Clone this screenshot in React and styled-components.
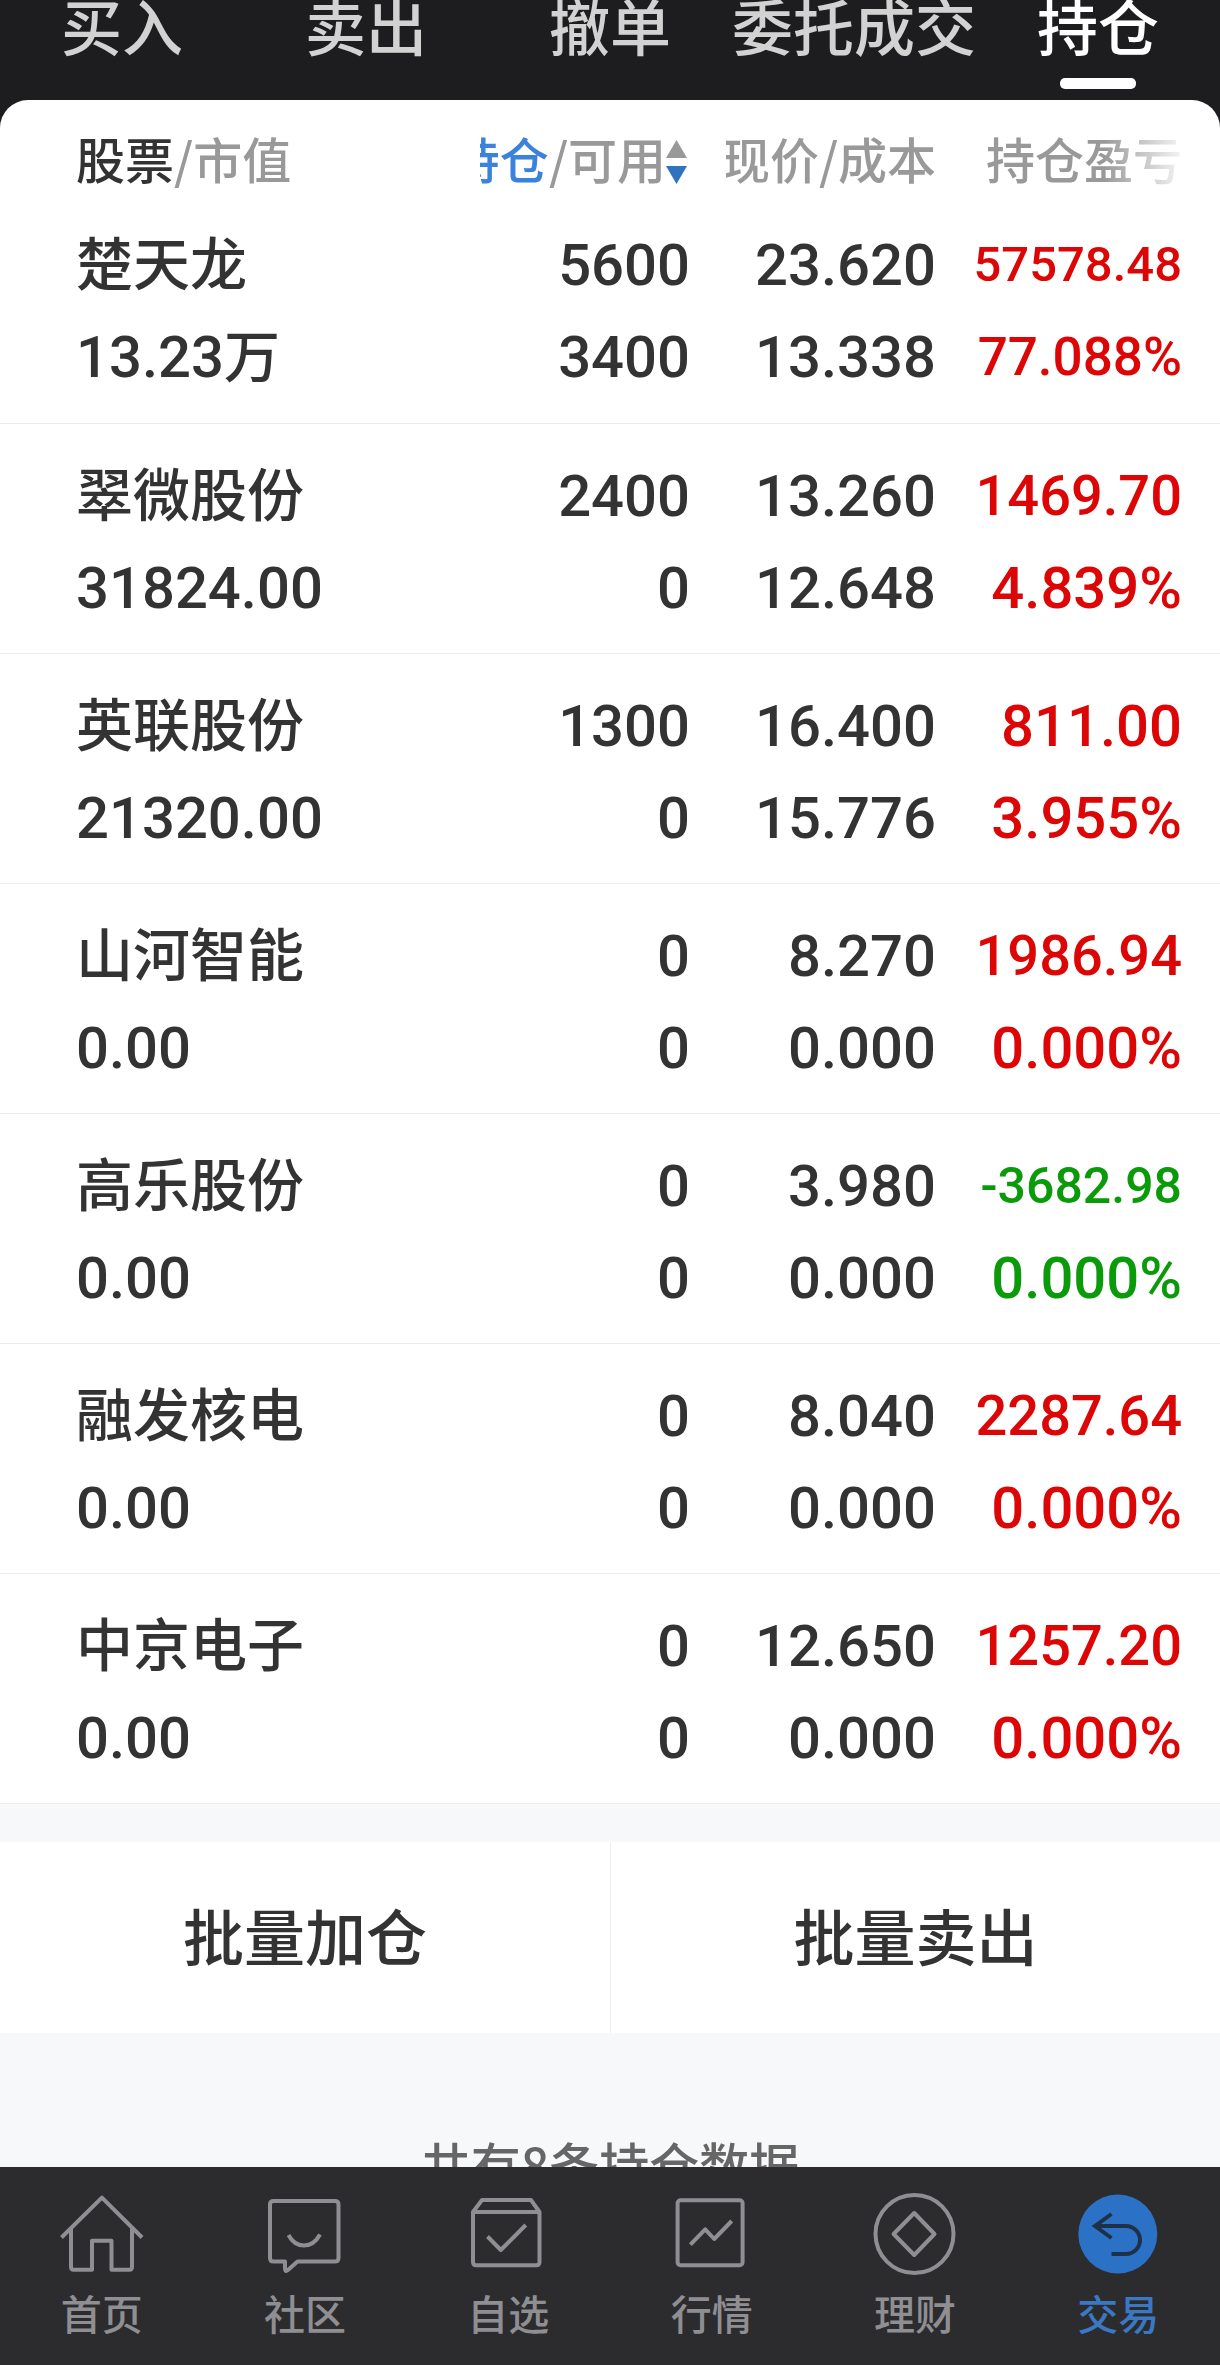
import React, { useState } from "react";
import styled, { createGlobalStyle } from "styled-components";

const cjk = '"Noto Sans CJK SC", sans-serif';
const numeric = 'Roboto, "Noto Sans CJK SC", sans-serif';

const GlobalStyle = createGlobalStyle`
  *, *::before, *::after { box-sizing: border-box; }
  body {
    margin: 0;
    background: #f7f8fa;
    font-family: ${cjk};
    font-weight: 500;
    color: #333;
  }
  button {
    margin: 0;
    padding: 0;
    border: 0;
    background: none;
    font: inherit;
    color: inherit;
    cursor: pointer;
  }
`;

const Screen = styled.div`
  display: flex;
  flex-direction: column;
  height: 100vh;
  background: #f7f8fa;
`;

const TabStrip = styled.nav`
  flex: none;
  display: grid;
  grid-template-columns: repeat(5, 1fr);
  background: #1d1d1f;
`;

const Tab = styled.button`
  display: flex;
  flex-direction: column;
  align-items: center;
  gap: 28px;
  padding-bottom: 11px;
  font-size: 61px;
  line-height: 50px;
  white-space: nowrap;
  color: ${(p) => (p.$active ? "#fff" : "#d2d2d2")};

  &::after {
    content: "";
    width: 76px;
    height: 11px;
    border-radius: 5px;
    background: ${(p) => (p.$active ? "#fff" : "transparent")};
  }
`;

const Backdrop = styled.div`
  flex: 1;
  min-height: 0;
  background: linear-gradient(#1d1d1f 60px, #f7f8fa 60px);
`;

const Scroller = styled.main`
  height: 100%;
  overflow-y: auto;
  scrollbar-width: none;
  border-radius: 28px 28px 0 0;
  background: #f7f8fa;
`;

const Holdings = styled.table`
  width: 100%;
  table-layout: fixed;
  border-collapse: collapse;
  background: #fff;
`;

const StockCol = styled.col``;
const ValueCol = styled.col`
  width: 246px;
`;
const ProfitCol = styled.col`
  width: 284px;
`;

const HeadCell = styled.th`
  height: 93px;
  padding: 28px ${(p) => (p.$last ? "38px" : "0")} 0 ${(p) => (p.$first ? "76px" : "36px")};
  font-size: 49px;
  font-weight: 500;
  line-height: 60px;
  text-align: left;
  vertical-align: top;
  white-space: nowrap;
  color: #999;
`;

const HeadLabel = styled.div`
  display: flex;
  align-items: center;
  justify-content: ${(p) => (p.$start ? "flex-start" : "flex-end")};
  overflow: hidden;
`;

const SortButton = styled.button`
  display: flex;
  align-items: center;
  font-weight: 500;
`;

const FadedText = styled.span`
  mask-image: linear-gradient(to right, #000 60%, rgba(0, 0, 0, 0.1) 100%);
`;

const Strong = styled.span`
  color: #333;
`;
const Sorted = styled.span`
  color: #3b82dc;
`;

const Row = styled.tr`
  border-bottom: 1px solid #ededed;
`;

const Cell = styled.td`
  height: 230px;
  padding: 26px ${(p) => (p.$last ? "38px" : "0")} 19px ${(p) => (p.$first ? "76px" : "0")};
  text-align: ${(p) => (p.$first ? "left" : "right")};
  vertical-align: top;
  white-space: nowrap;
  font-family: ${numeric};
  font-size: 58px;
  line-height: 92px;
  color: ${(p) => (p.$tone === "up" ? "#dd0606" : p.$tone === "down" ? "#0a9a0a" : "#333")};
`;

const Name = styled.div`
  height: 92px;
  font-family: ${cjk};
  font-size: 57px;
  line-height: 82px;
`;

const Line = styled.div`
  height: 92px;
  font-size: ${(p) => (p.$size ? `${p.$size}px` : "inherit")};
`;

const Unit = styled.span`
  font-family: ${cjk};
  font-size: 56px;
  line-height: 1;
`;

const Actions = styled.div`
  display: grid;
  grid-template-columns: 1fr 1fr;
  margin-top: 38px;
  background: #fff;
`;

const ActionButton = styled.button`
  height: 191px;
  padding-bottom: 4px;
  font-size: 61px;
  line-height: 80px;

  & + & {
    border-left: 1px solid #eee;
  }
`;

const Summary = styled.p`
  margin: 0;
  padding: 95px 0 40px;
  font-size: 50px;
  line-height: 70px;
  text-align: center;
  color: #666;
`;

const BottomNav = styled.nav`
  flex: none;
  display: grid;
  grid-template-columns: repeat(6, 1fr);
  padding: 25px 0 29px;
  background: #2c2c2e;
`;

const NavLink = styled.a`
  display: flex;
  flex-direction: column;
  align-items: center;
  gap: 12px;
  font-size: 41px;
  font-weight: 500;
  line-height: 48px;
  text-decoration: none;
  color: ${(p) => (p.$active ? "#3a78c3" : "#8e8e93")};
`;

const NavIcon = styled.svg`
  width: 84px;
  height: 84px;
  fill: none;
  stroke: #8e8e93;
  stroke-width: 4;
  stroke-linejoin: round;
`;

const SortIcon = styled.svg`
  flex: none;
  width: 24px;
  height: 44px;
  margin-top: 8px;
`;

const tabs = ["买入", "卖出", "撤单", "委托成交", "持仓"];

const holdings = [
  { name: "楚天龙", value: "13.23", unit: "万", held: "5600", usable: "3400", price: "23.620", cost: "13.338", profit: "57578.48", rate: "77.088%" },
  { name: "翠微股份", value: "31824.00", held: "2400", usable: "0", price: "13.260", cost: "12.648", profit: "1469.70", rate: "4.839%" },
  { name: "英联股份", value: "21320.00", held: "1300", usable: "0", price: "16.400", cost: "15.776", profit: "811.00", rate: "3.955%" },
  { name: "山河智能", value: "0.00", held: "0", usable: "0", price: "8.270", cost: "0.000", profit: "1986.94", rate: "0.000%" },
  { name: "高乐股份", value: "0.00", held: "0", usable: "0", price: "3.980", cost: "0.000", profit: "-3682.98", rate: "0.000%" },
  { name: "融发核电", value: "0.00", held: "0", usable: "0", price: "8.040", cost: "0.000", profit: "2287.64", rate: "0.000%" },
  { name: "中京电子", value: "0.00", held: "0", usable: "0", price: "12.650", cost: "0.000", profit: "1257.20", rate: "0.000%" },
];

// Long figures step down in size so that they stay inside the profit column.
const fitSize = (text) => {
  if (text.length >= 8) return text.startsWith("-") ? 50 : 49;
  if (text.length === 7) return text.endsWith("%") ? 53 : 56;
  return 58;
};

const navItems = [
  {
    label: "首页",
    icon: (
      <>
        <path d="M1.5 45.5 41.9 5.6l40.2 39.9" />
        <path d="M11 36.500V75q0 2.700 2.700 2.700H32V48.700h19.500v29h18q2.500 0 2.500-2.700V36.500" />
      </>
    ),
  },
  {
    label: "社区",
    icon: (
      <>
        <path d="M10.500 9h61.500q3.500 0 3.500 3.500v53.500q0 3.500-3.500 3.500H34.500L25 78q-3 2.500-3-1.500v-7H10.500Q7 69.500 7 66V12.500Q7 9 10.500 9Z" />
        <path d="M25.500 43q5.500 10.500 15.500 10.500T57 42.500" />
      </>
    ),
  },
  {
    label: "自选",
    icon: (
      <>
        <path d="M7 20 16 8h49l8.500 12v50q0 3.300-3.300 3.300H10.300Q7 73.300 7 70ZM7 20h66.500" />
        <path d="m21.500 44.500 13.300 13.500 25-25" />
      </>
    ),
  },
  {
    label: "行情",
    icon: (
      <>
        <rect x="7.600" y="8.300" width="65" height="65" rx="3" />
        <path d="m20.400 52.700 14.800-15.400 9 9.700 17.500-18" />
      </>
    ),
  },
  {
    label: "理财",
    icon: (
      <>
        <circle cx="41.500" cy="42" r="39" />
        <path d="M41.200 21 61.500 42 41.200 63 20.600 42Z" />
      </>
    ),
  },
  {
    label: "交易",
    icon: (
      <>
        <circle cx="41.800" cy="42" r="39.500" fill="#2b72c6" stroke="none" />
        <path d="M35.500 22 19 34l16.500 12M19 34h31a14 14 0 0 1 0 28H35.500" stroke="#1f3148" strokeLinejoin="miter" />
      </>
    ),
  },
];

export default function App() {
  const [tab, setTab] = useState("持仓");

  return (
    <Screen>
      <GlobalStyle />
      <TabStrip>
        {tabs.map((t) => (
          <Tab key={t} type="button" $active={t === tab} onClick={() => setTab(t)}>
            {t}
          </Tab>
        ))}
      </TabStrip>

      <Backdrop>
        <Scroller>
          <Holdings>
            <colgroup>
              <StockCol />
              <ValueCol />
              <ValueCol />
              <ProfitCol />
            </colgroup>
            <thead>
              <tr>
                <HeadCell $first>
                  <HeadLabel $start>
                    <Strong>股票</Strong>/市值
                  </HeadLabel>
                </HeadCell>
                <HeadCell>
                  <HeadLabel>
                    <SortButton type="button">
                      <Sorted>持仓</Sorted>/可用
                      <SortIcon viewBox="0 0 24 44" aria-hidden="true">
                        <path d="M10.500 0 21 18H0Z" fill="#999" />
                        <path d="M0 26h21L10.500 44Z" fill="#2f73c0" />
                      </SortIcon>
                    </SortButton>
                  </HeadLabel>
                </HeadCell>
                <HeadCell>
                  <HeadLabel>现价/成本</HeadLabel>
                </HeadCell>
                <HeadCell $last>
                  <HeadLabel>
                    <FadedText>持仓盈亏</FadedText>
                  </HeadLabel>
                </HeadCell>
              </tr>
            </thead>
            <tbody>
              {holdings.map((h) => (
                <Row key={h.name}>
                  <Cell $first>
                    <Name>{h.name}</Name>
                    <Line>
                      {h.value}
                      {h.unit && <Unit>{h.unit}</Unit>}
                    </Line>
                  </Cell>
                  <Cell>
                    <Line>{h.held}</Line>
                    <Line>{h.usable}</Line>
                  </Cell>
                  <Cell>
                    <Line>{h.price}</Line>
                    <Line>{h.cost}</Line>
                  </Cell>
                  <Cell $last $tone={h.profit.startsWith("-") ? "down" : "up"}>
                    <Line $size={fitSize(h.profit)}>{h.profit}</Line>
                    <Line $size={fitSize(h.rate)}>{h.rate}</Line>
                  </Cell>
                </Row>
              ))}
            </tbody>
          </Holdings>

          <Actions>
            <ActionButton type="button">批量加仓</ActionButton>
            <ActionButton type="button">批量卖出</ActionButton>
          </Actions>

          <Summary>共有8条持仓数据</Summary>
        </Scroller>
      </Backdrop>

      <BottomNav>
        {navItems.map((item) => (
          <NavLink key={item.label} href="#" $active={item.label === "交易"}>
            <NavIcon viewBox="0 0 84 84" aria-hidden="true">
              {item.icon}
            </NavIcon>
            {item.label}
          </NavLink>
        ))}
      </BottomNav>
    </Screen>
  );
}
